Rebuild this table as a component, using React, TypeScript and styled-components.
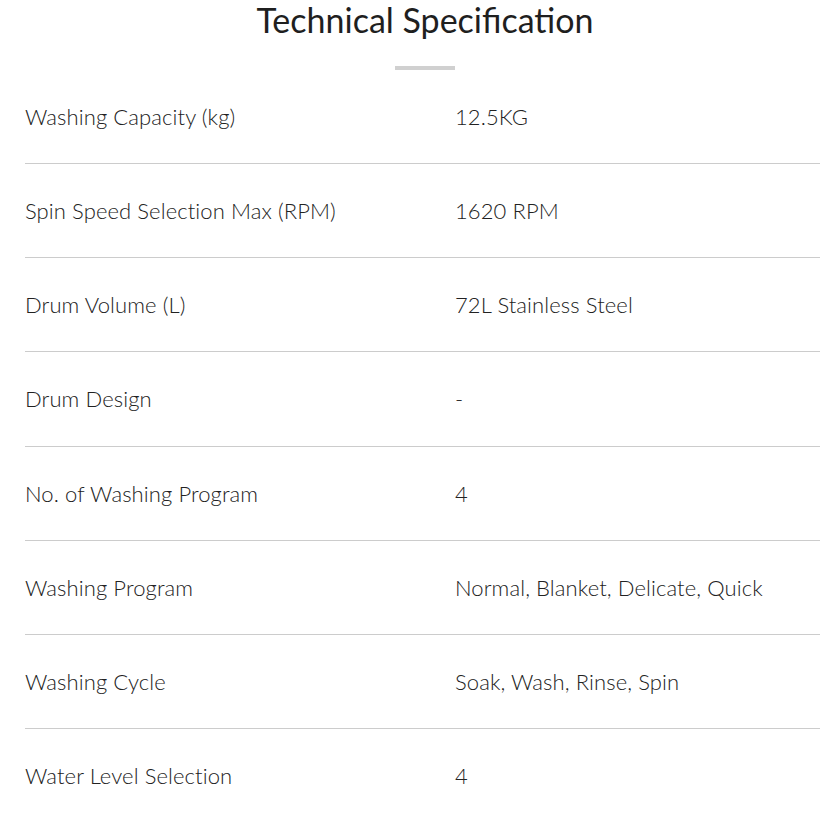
import React from "react";
import styled, { createGlobalStyle } from "styled-components";

const Global = createGlobalStyle`
  html, body { margin: 0; padding: 0; background: #fff; }
  body { font-family: Lato, "Open Sans", sans-serif; color: #222; overflow: hidden; }
`;

const Page = styled.section`
  width: 800px;
  margin-left: 25px;
`;

const Header = styled.header`
  display: flex;
  flex-direction: column;
  align-items: center;
`;

const Title = styled.h2`
  margin: 0;
  font-size: 34px;
  line-height: 40px;
  font-weight: 400;
  color: #1f1f1f;
`;

const Bar = styled.div`
  width: 60px;
  height: 4px;
  background: #d0d0d0;
  margin-top: 26px;
`;

const Table = styled.div`
  display: flex;
  flex-direction: column;
`;

const Row = styled.div`
  display: grid;
  grid-template-columns: 430px 1fr;
  padding: 34px 0 33.17px;
  border-bottom: 1px solid #cccccc;
`;

const Cell = styled.div`
  font-size: 22px;
  line-height: 26px;
  font-weight: 300;
  color: #222;
  letter-spacing: 0.1px;
`;

const rows: [string, string][] = [
  ["Washing Capacity (kg)", "12.5KG"],
  ["Spin Speed Selection Max (RPM)", "1620 RPM"],
  ["Drum Volume (L)", "72L Stainless Steel"],
  ["Drum Design", "-"],
  ["No. of Washing Program", "4"],
  ["Washing Program", "Normal, Blanket, Delicate, Quick"],
  ["Washing Cycle", "Soak, Wash, Rinse, Spin"],
  ["Water Level Selection", "4"],
];

export default function App() {
  return (
    <Page>
      <Global />
      <Header>
        <Title>Technical Specification</Title>
        <Bar />
      </Header>
      <Table>
        {rows.map(([k, v]) => (
          <Row key={k}>
            <Cell>{k}</Cell>
            <Cell>{v}</Cell>
          </Row>
        ))}
      </Table>
    </Page>
  );
}
